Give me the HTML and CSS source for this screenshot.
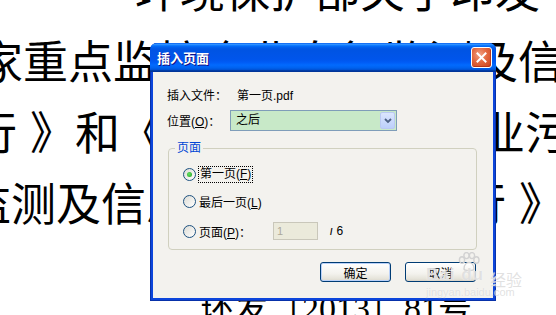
FILE: index.html
```html
<!DOCTYPE html>
<html lang="zh-CN">

<head>
  <meta charset="UTF-8">
  <meta name="viewport" content="width=device-width, initial-scale=1.0">
  <title>插入页面</title>
  <link rel="stylesheet" href="styles.css">
</head>

<body>
  <div class="doc">
    <p class="line l1">环境保护部关于印发</p>
    <p class="line l2">国家重点监控企业自行监测及信息</p>
    <p class="line l3">行<span class="gap">》</span>和《国家重点监控企业污染源</p>
    <p class="line l4">监测及信息公开办法（试行<span class="gap">》</span></p>
    <p class="line l5">环发〔2013〕81号</p>
  </div>

  <div class="window">
    <div class="titlebar">
      <span class="title">插入页面</span>
      <button type="button" class="close">
        <svg width="11" height="11" viewBox="0 0 11 11">
          <path d="M1.5 1.5 L9.5 9.5 M9.5 1.5 L1.5 9.5" stroke="#fff" stroke-width="2" stroke-linecap="square" />
        </svg>
      </button>
    </div>

    <div class="client">
      <div class="row row-file">
        <span class="label label-file">插入文件：</span>
        <span>第一页.pdf</span>
      </div>

      <div class="row row-pos">
        <span class="label label-pos">位置(<u>O</u>)：</span>
        <div class="combo">
          <span class="combo-text">之后</span>
          <span class="combo-btn">
            <svg width="8" height="6" viewBox="0 0 8 6">
              <path d="M1 1 L4 4 L7 1" stroke="#4d6185" stroke-width="1.8" fill="none" />
            </svg>
          </span>
        </div>
      </div>

      <fieldset class="group">
        <legend>页面</legend>
        <div class="opt">
          <span class="radio checked"></span>
          <span class="focus">第一页(<u>F</u>)</span>
        </div>
        <div class="opt opt-last">
          <span class="radio"></span>
          <span>最后一页(<u>L</u>)</span>
        </div>
        <div class="opt opt-page">
          <span class="radio"></span>
          <span class="label-page">页面(<u>P</u>)：</span>
          <input class="page-num" type="text" value="1" disabled>
          <span class="slash">/</span>
          <span class="total">6</span>
        </div>
      </fieldset>

      <div class="buttons">
        <button type="button" class="btn btn-default">确定</button>
        <button type="button" class="btn">取消</button>
      </div>
    </div>
  </div>

  <div class="watermark">
    <svg class="paw" width="22" height="20" viewBox="0 0 22 20">
      <g fill="none" stroke="#d2d2d2" stroke-width="1.4">
        <ellipse cx="4" cy="8" rx="2.6" ry="3.2" />
        <ellipse cx="8.5" cy="3.6" rx="2.6" ry="3" />
        <ellipse cx="14" cy="3.6" rx="2.6" ry="3" />
        <ellipse cx="18.4" cy="8" rx="2.6" ry="3.2" />
        <path d="M6 17 C6 12 9 10.5 11 10.5 C13 10.5 16 12 16 17 C16 19 6 19 6 17 Z" />
      </g>
    </svg>
    <span class="wm-baidu">Bai du</span>
    <span class="wm-jy">经验</span>
    <span class="wm-url">jingyan.baidu.com</span>
  </div>
</body>

</html>
```

FILE: styles.css
```css
* {
  margin: 0;
  padding: 0;
  box-sizing: border-box;
}

html,
body {
  width: 556px;
  height: 315px;
  overflow: hidden;
  background-color: #fff;
}

body {
  position: relative;
  font-family: "Liberation Sans", "Noto Sans CJK SC", sans-serif;
}

/* document behind the dialog */
.doc {
  margin-top: -47px;
  color: #000;
  font-family: "Noto Sans CJK SC", sans-serif;
  font-size: 45px;
  line-height: 71px;
  white-space: nowrap;
}

.l1 {
  text-indent: 135px;
}

.l2 {
  text-indent: -67px;
}

.l3 {
  text-indent: -28px;
}

.l4 {
  text-indent: -34px;
}

.gap {
  margin-left: 13px;
}

.l5 {
  margin-top: 52px;
  text-indent: 200px;
  font-family: "Liberation Serif", "Noto Sans CJK SC", serif;
  font-size: 34px;
  line-height: 40px;
}

/* XP style window */
.window {
  position: absolute;
  left: 150px;
  top: 43px;
  width: 346px;
  height: 258px;

  display: flex;
  flex-direction: column;

  background-color: #0c45db;
  border-radius: 7px 7px 0 0;
  box-shadow: inset 0 0 0 1px #0831a9;
  overflow: hidden;
}

.titlebar {
  flex: none;
  height: 29px;
  padding: 0 4px 0 7px;

  display: flex;
  align-items: center;
  justify-content: space-between;

  background: linear-gradient(to bottom,
      #0058ee 0%, #3593ff 4%, #288eff 6%, #127dff 8%, #036ffc 10%,
      #0262ee 14%, #0057e5 20%, #0054e3 24%, #0055eb 56%, #005bf5 66%,
      #026afe 76%, #0062ef 86%, #0052d6 92%, #0040ab 94%, #003092 100%);
}

.title {
  color: #fff;
  font-family: "Noto Sans CJK SC", sans-serif;
  font-size: 13px;
  font-weight: 700;
  text-shadow: 1px 1px 0 #0f1089;
}

.close {
  width: 21px;
  height: 21px;

  display: flex;
  align-items: center;
  justify-content: center;

  border: 1px solid #fff;
  border-radius: 3px;
  background: radial-gradient(circle at 40% 35%, #f0a286 0%, #e3683f 45%, #c8401c 100%);
  box-shadow: inset -1px -1px 0 #b8371a;
}

.client {
  flex: 1;
  margin: 0 3px 3px;
  padding: 14px 16px 0 14px;

  display: flex;
  flex-direction: column;

  background-color: #f3f2ee;
  color: #000;
  font-size: 12px;
}

.row {
  display: flex;
  align-items: center;
}

.row-file {
  height: 16px;
}

.row-pos {
  height: 21px;
  margin-top: 8px;
}

.label-file {
  width: 70px;
}

.label-pos {
  width: 63px;
}

u {
  text-decoration: underline;
  text-underline-offset: 1px;
}

.combo {
  width: 167px;
  height: 21px;
  padding: 1px;

  display: flex;
  align-items: stretch;

  border: 1px solid #7f9db9;
  background-color: #c8e9c8;
}

.combo-text {
  flex: 1;
  padding-left: 4px;
  line-height: 17px;
}

.combo-btn {
  width: 15px;

  display: flex;
  align-items: center;
  justify-content: center;

  border: 1px solid #bac9f2;
  border-radius: 2px;
  background: linear-gradient(to bottom, #dbe6fd, #bccffb);
}

.group {
  margin: 9px 0 0 1px;
  padding: 8px 14px 8px 14px;

  border: 1px solid #d0d0bf;
  border-radius: 4px;
}

.group legend {
  margin-left: -8px;
  padding: 0 2px;

  color: #0046d5;
  font-size: 12px;
  line-height: 16px;
}

.opt {
  height: 20px;

  display: flex;
  align-items: center;
}

.opt-last {
  margin-top: 7px;
}

.opt-page {
  margin-top: 10px;
}

.radio {
  position: relative;
  width: 13px;
  height: 13px;
  margin-right: 3px;

  border: 1px solid #1c5180;
  border-radius: 50%;
  background: linear-gradient(135deg, #dcdcd5, #fff);
}

.radio.checked::after {
  content: "";
  position: absolute;
  left: 3px;
  top: 3px;

  width: 5px;
  height: 5px;

  border-radius: 50%;
  background: radial-gradient(circle at 40% 40%, #63e063, #21a121);
}

.focus {
  padding: 0 1px;
  outline: 1px dotted #000;
  line-height: 15px;
}

.label-page {
  width: 74px;
}

.page-num {
  width: 45px;
  height: 18px;
  padding-left: 3px;

  border: 1px solid #c9c7ba;
  background-color: #ebeadb;
  color: #aca899;

  font-family: "Liberation Sans", sans-serif;
  font-size: 11px;
}

.slash {
  margin-left: 12px;
  font-size: 9px;
  font-weight: 700;
  transform: translateY(1px);
}

.total {
  margin-left: 4px;
  font-size: 12px;
}

.buttons {
  margin-top: 12px;
  margin-right: 1px;

  display: flex;
  justify-content: flex-end;
  gap: 14px;
}

.btn {
  width: 71px;
  height: 20px;

  border: 1px solid #003c74;
  border-radius: 3px;
  background: linear-gradient(to bottom, #fff 0%, #f3f2ed 60%, #e4e2d8 90%, #d6d0c5 100%);

  color: #000;
  font-family: "Noto Sans CJK SC", sans-serif;
  font-size: 12px;
}

.btn-default {
  box-shadow: inset 0 0 0 1px #b9d1f9;
}

/* faint site watermark */
.watermark {
  position: absolute;
  left: 424px;
  top: 252px;
  width: 110px;
  height: 50px;

  color: rgba(205, 205, 205, 0.6);
  text-shadow: 0 0 1px #fff;
  pointer-events: none;
}

.paw {
  position: absolute;
  left: 34px;
  top: 0;
}

.wm-baidu {
  position: absolute;
  left: 2px;
  top: 13px;

  font-family: "Liberation Sans", sans-serif;
  font-size: 17px;
  font-weight: 700;
  letter-spacing: 1px;
}

.wm-jy {
  position: absolute;
  left: 66px;
  top: 15px;

  font-family: "Noto Sans CJK SC", sans-serif;
  font-size: 16px;
}

.wm-url {
  position: absolute;
  left: 2px;
  top: 34px;

  font-family: "Liberation Sans", sans-serif;
  font-size: 11px;
}
```
